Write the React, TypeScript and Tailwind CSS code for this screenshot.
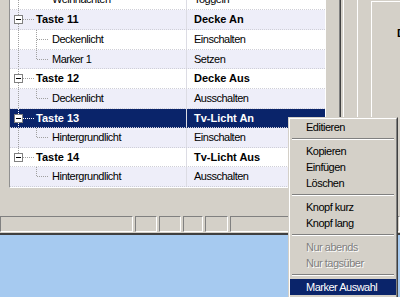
import React from 'react';

type Row = {
  label: string;
  action: string;
  parent: boolean;
  h: string;
  bg: 'white' | 'lav' | 'sel';
  last?: boolean;
  lastParent?: boolean;
  px: number;
};

const rows: Row[] = [
  { label: 'Weihnachten', action: 'Toggeln', parent: false, h: 'h-[20px]', bg: 'white', last: true, px: 20 },
  { label: 'Taste 11', action: 'Decke An', parent: true, h: 'h-[20px]', bg: 'lav', px: 20 },
  { label: 'Deckenlicht', action: 'Einschalten', parent: false, h: 'h-[20px]', bg: 'white', px: 20 },
  { label: 'Marker 1', action: 'Setzen', parent: false, h: 'h-[19px]', bg: 'lav', last: true, px: 19 },
  { label: 'Taste 12', action: 'Decke Aus', parent: true, h: 'h-[20px]', bg: 'white', px: 20 },
  { label: 'Deckenlicht', action: 'Ausschalten', parent: false, h: 'h-[20px]', bg: 'lav', last: true, px: 20 },
  { label: 'Taste 13', action: 'Tv-Licht An', parent: true, h: 'h-[19px]', bg: 'sel', px: 19 },
  { label: 'Hintergrundlicht', action: 'Einschalten', parent: false, h: 'h-[20px]', bg: 'lav', last: true, px: 20 },
  { label: 'Taste 14', action: 'Tv-Licht Aus', parent: true, h: 'h-[19px]', bg: 'white', lastParent: true, px: 19 },
  { label: 'Hintergrundlicht', action: 'Ausschalten', parent: false, h: 'h-[20px]', bg: 'lav', last: true, lastParent: true, px: 20 },
];

const bgClass = {
  white: 'bg-white text-black',
  lav: 'bg-[#eeeef9] text-black',
  sel: 'bg-[#0a246a] text-white',
};

// dotted tree connectors for one row
const TreeLines = ({ row }: { row: Row }) => {
  const h = row.px - 1;
  const c = Math.floor(h / 2) + 0.5;
  const col = row.bg === 'sel' ? '#ffffff' : '#a0a0a0';
  const w = row.parent ? 26 : 42;
  return (
    <svg width={w} height={h} className="shrink-0" shapeRendering="crispEdges">
      {row.parent ? (
        <>
          <line x1={8.5} y1={0} x2={8.5} y2={row.lastParent ? c : h} stroke={col} strokeDasharray="1 1" />
          <line x1={13} y1={c} x2={24} y2={c} stroke={col} strokeDasharray="1 1" />
          <rect x={4.5} y={c - 4} width={8} height={8} fill="#ffffff" stroke="#808080" />
          <rect x={6} y={c - 0.5} width={5} height={1} fill="#000000" />
        </>
      ) : (
        <>
          {!row.lastParent && <line x1={8.5} y1={0} x2={8.5} y2={h} stroke={col} strokeDasharray="1 1" />}
          <line x1={26.5} y1={0} x2={26.5} y2={row.last ? c : h} stroke={col} strokeDasharray="1 1" />
          <line x1={27} y1={c} x2={38} y2={c} stroke={col} strokeDasharray="1 1" />
        </>
      )}
    </svg>
  );
};

type MenuEntry = { t?: string; sep?: boolean; dis?: boolean; hi?: boolean };

const menu: MenuEntry[] = [
  { t: 'Editieren' },
  { sep: true },
  { t: 'Kopieren' },
  { t: 'Einfügen' },
  { t: 'Löschen' },
  { sep: true },
  { t: 'Knopf kurz' },
  { t: 'Knopf lang' },
  { sep: true },
  { t: 'Nur abends', dis: true },
  { t: 'Nur tagsüber', dis: true },
  { sep: true },
  { t: 'Marker Auswahl', hi: true },
];

const ContextMenu = () => (
  <div className="absolute left-[288px] top-[117px] w-[110px] h-[200px] border border-t-[#d4d0c8] border-l-[#d4d0c8] border-r-[#404040] border-b-[#404040] bg-[#d4d0c8]">
    <div className="h-full border border-t-white border-l-white border-r-[#808080] border-b-[#808080]">
      {menu.map((m, i) =>
        m.sep ? (
          <div key={i} className="h-[8px] pt-[3px] px-[2px]">
            <div className="h-[2px] border-t border-t-[#808080] border-b border-b-white" />
          </div>
        ) : (
          <div
            key={i}
            className={`h-[16px] flex items-center pl-[16px] tracking-[-0.5px] ${
              m.hi ? 'bg-[#0a246a] text-white' : m.dis ? 'text-[#808080] [text-shadow:1px_1px_0_#ffffff]' : 'text-black'
            }`}
          >
            {m.t}
          </div>
        )
      )}
    </div>
  </div>
);

export default function App() {
  return (
    <div className="relative w-[400px] h-[297px] overflow-hidden bg-[#d4d0c8] font-['Liberation_Sans',Arial,sans-serif] text-[11px] leading-none">
      <div className="flex h-[216px]">
        <div className="w-[9px] shrink-0" />
        <div className="w-[317px] h-[188px] shrink-0 overflow-hidden border-l border-l-[#909090] border-r border-r-white border-b border-b-white bg-white">
          <div className="-mt-[10px]">
            {rows.map((r, i) => (
              <div key={i} className={`flex border-b border-dotted border-b-[#cfcfd8] ${r.h} ${bgClass[r.bg]}`}>
                <div className="w-[176px] shrink-0 flex items-center">
                  <TreeLines row={r} />
                  <span className={r.parent ? 'font-bold' : 'tracking-[-0.5px]'}>{r.label}</span>
                </div>
                <div className="flex-1 flex items-center pl-[7px] border-l border-l-[#dcdce4]">
                  <span className={r.parent ? 'font-bold' : 'tracking-[-0.5px]'}>{r.action}</span>
                </div>
              </div>
            ))}
          </div>
        </div>
        <div className="w-[13px] shrink-0" />
        <div className="w-[1px] shrink-0 bg-[#808080]" />
        <div className="w-[1px] shrink-0 bg-[#404040]" />
        <div className="w-[2px] shrink-0" />
        <div className="w-[1px] shrink-0 bg-white" />
        <div className="w-[13px] shrink-0" />
        <div className="w-[1px] shrink-0 bg-white" />
        <div className="w-[13px] shrink-0" />
        <div className="flex-1 mt-[1px] border-l border-t border-white overflow-hidden pt-[26px] pl-[25px] font-bold text-black text-[11px]">
          Dialog
        </div>
      </div>
      <div className="flex gap-[2px] h-[16px]">
        <div className="w-[133px] border-t border-l border-t-[#808080] border-l-[#808080] border-b border-r border-b-white border-r-white" />
        <div className="w-[22px] border-t border-l border-t-[#808080] border-l-[#808080] border-b border-r border-b-white border-r-white" />
        <div className="w-[22px] border-t border-l border-t-[#808080] border-l-[#808080] border-b border-r border-b-white border-r-white" />
        <div className="w-[20px] border-t border-l border-t-[#808080] border-l-[#808080] border-b border-r border-b-white border-r-white" />
        <div className="w-[23px] border-t border-l border-t-[#808080] border-l-[#808080] border-b border-r border-b-white border-r-white" />
        <div className="flex-1 border-t border-l border-t-[#808080] border-l-[#808080] border-b border-r border-b-white border-r-white" />
      </div>
      <div className="h-[1px]" />
      <div className="h-[2px] bg-[#404040]" />
      <div className="h-[62px] bg-[#a6caf0]" />
      <ContextMenu />
    </div>
  );
}
